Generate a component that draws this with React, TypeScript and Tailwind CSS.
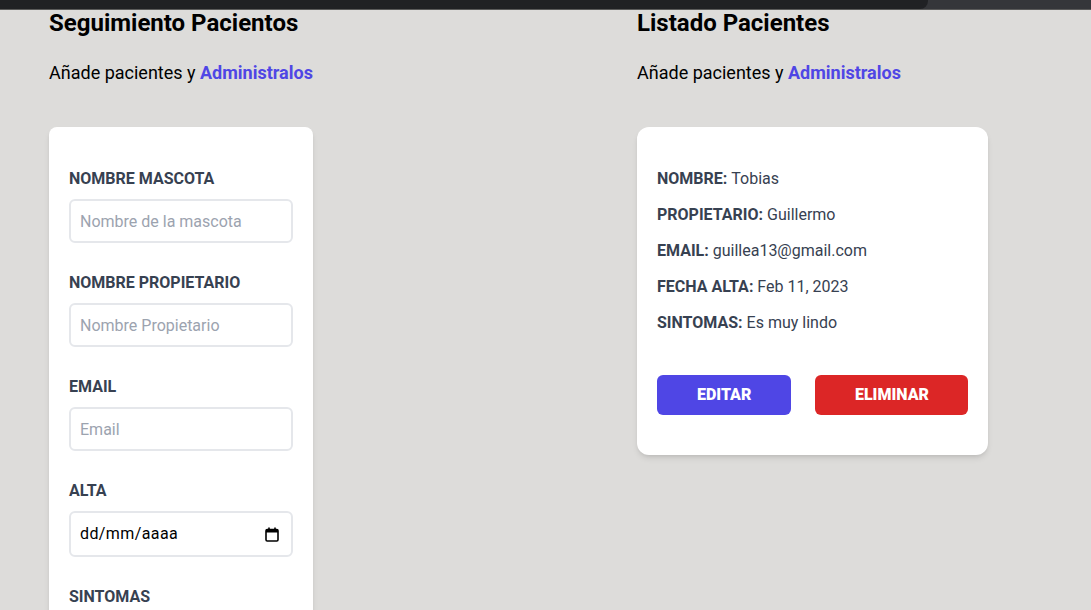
import React from 'react';

const CalendarIcon: React.FC = () => (
  <svg width="14" height="15" viewBox="0 0 14 15" fill="none">
    <rect x="1" y="2.5" width="12" height="11.5" rx="1.2" stroke="#000" strokeWidth="1.6" />
    <rect x="1" y="2.5" width="12" height="3" fill="#000" />
    <rect x="3.2" y="0.5" width="1.6" height="3" fill="#000" />
    <rect x="9.2" y="0.5" width="1.6" height="3" fill="#000" />
  </svg>
);

const Formulario: React.FC = () => {
  return (
    <div className="w-[588px] shrink-0">
      <h2 className="font-bold text-2xl leading-8 text-black">Seguimiento Pacientos</h2>
      <p className="text-lg leading-7 mt-5 mb-10 text-black">
        Añade pacientes y <span className="text-[#4f46e5] font-bold">Administralos</span>
      </p>

      <form className="w-[264px] bg-white shadow-md rounded-lg py-10 px-5">
        <div className="mb-7">
          <label className="block text-[#374151] uppercase font-bold leading-6">Nombre Mascota</label>
          <input
            type="text"
            placeholder="Nombre de la mascota"
            className="border-2 border-[#e5e7eb] w-full h-[44px] px-[9px] mt-2 placeholder-[#9ca3af] rounded-md outline-none"
          />
        </div>
        <div className="mb-7">
          <label className="block text-[#374151] uppercase font-bold leading-6">Nombre Propietario</label>
          <input
            type="text"
            placeholder="Nombre Propietario"
            className="border-2 border-[#e5e7eb] w-full h-[44px] px-[9px] mt-2 placeholder-[#9ca3af] rounded-md outline-none"
          />
        </div>
        <div className="mb-7">
          <label className="block text-[#374151] uppercase font-bold leading-6">Email</label>
          <input
            type="email"
            placeholder="Email"
            className="border-2 border-[#e5e7eb] w-full h-[44px] px-[9px] mt-2 placeholder-[#9ca3af] rounded-md outline-none"
          />
        </div>
        <div className="mb-7">
          <label className="block text-[#374151] uppercase font-bold leading-6">Alta</label>
          <div className="border-2 border-[#e5e7eb] w-full h-[46px] pl-[9px] pr-3 mt-2 rounded-md flex items-center justify-between text-black">
            <span className="tracking-[0.4px]">dd/mm/aaaa</span>
            <CalendarIcon />
          </div>
        </div>
        <div className="mb-7">
          <label className="block text-[#374151] uppercase font-bold leading-6">Sintomas</label>
          <textarea
            placeholder="Describe los Síntomas"
            className="border-2 border-[#e5e7eb] w-full p-2 mt-2 placeholder-[#9ca3af] rounded-md outline-none"
          />
        </div>
        <input
          type="submit"
          value="Agregar Paciente"
          className="bg-[#4f46e5] w-full p-3 text-white uppercase font-bold rounded-md"
        />
      </form>
    </div>
  );
};

const Campo: React.FC<{ label: string; valor: string }> = ({ label, valor }) => (
  <p className="font-bold mb-3 text-[#374151] uppercase leading-6">
    {label}: <span className="font-normal normal-case">{valor}</span>
  </p>
);

const Listado: React.FC = () => {
  return (
    <div className="w-[400px]">
      <h2 className="font-bold text-2xl leading-8 text-black">Listado Pacientes</h2>
      <p className="text-lg leading-7 mt-5 mb-10 text-black">
        Añade pacientes y <span className="text-[#4f46e5] font-bold">Administralos</span>
      </p>

      <div className="w-[351px] bg-white shadow-md rounded-xl px-5 py-10">
        <Campo label="Nombre" valor="Tobias" />
        <Campo label="Propietario" valor="Guillermo" />
        <Campo label="Email" valor="guillea13@gmail.com" />
        <Campo label="Fecha Alta" valor="Feb 11, 2023" />
        <Campo label="Sintomas" valor="Es muy lindo" />
        <div className="flex justify-between mt-10">
          <button type="button" className="py-2 px-10 bg-[#4f46e5] text-white font-black uppercase rounded-md leading-6">
            Editar
          </button>
          <button type="button" className="py-2 pl-10 pr-[39px] bg-[#dc2626] text-white font-black uppercase rounded-md leading-6">
            Eliminar
          </button>
        </div>
      </div>
    </div>
  );
}

export default function App() {
  return (
    <div className="min-h-screen bg-[#dddcda] font-['Roboto',sans-serif]">
      <div className="flex h-[10px] bg-[#35363a] border-b border-[#5a5a5a]">
        <div className="w-[928px] bg-[#202124] rounded-br-lg" />
      </div>
      <div className="flex pl-[49px] -mt-[3px]">
        <Formulario />
        <Listado />
      </div>
    </div>
  );
}
